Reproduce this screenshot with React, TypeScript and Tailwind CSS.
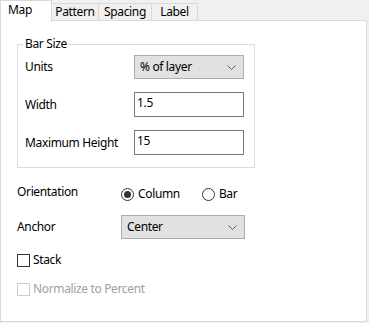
import React from "react";

const font = { fontFamily: '"Noto Sans", "Liberation Sans", sans-serif' };

function Chevron() {
  return (
    <svg width="9" height="5" viewBox="0 0 9 5" className="shrink-0">
      <path d="M0.5 0.5 L4.5 4.5 L8.5 0.5" fill="none" stroke="#5f5f5f" strokeWidth="1" />
    </svg>
  );
}

function Select({ value, className }: { value: string; className: string }) {
  return (
    <div
      className={`flex items-center justify-between h-[24px] bg-[#e1e1e1] border border-[#adadad] pl-[5px] pr-[7px] text-black ${className}`}
    >
      <span>{value}</span>
      <Chevron />
    </div>
  );
}

function TextBox({ value }: { value: string }) {
  return (
    <div className="h-[25px] w-[110px] bg-white border border-[#7a7a7a] pl-[2px] pt-[2px] leading-[16px] text-black">
      {value}
    </div>
  );
}

function Radio({ checked, label }: { checked: boolean; label: string }) {
  return (
    <div className="flex items-center gap-[4px]">
      <div className="w-[13px] h-[13px] rounded-full border border-[#333333] bg-white flex items-center justify-center">
        {checked && <div className="w-[7px] h-[7px] rounded-full bg-[#333333]" />}
      </div>
      <span>{label}</span>
    </div>
  );
}

export default function App() {
  return (
    <div
      className="w-[369px] h-[323px] bg-[#f0f0f0] text-[12px] tracking-[-0.35px] text-black"
      style={font}
    >
      <div className="flex items-end h-[21px]">
        <div className="relative z-10 h-[22px] w-[52px] bg-white border border-b-0 border-[#d9d9d9] pl-[7px] pt-[1px] leading-[16px] self-start">
          Map
        </div>
        <div className="h-[18px] w-[47px] border border-l-0 border-[#d9d9d9] bg-[#f0f0f0] flex justify-center leading-[16px]">
          Pattern
        </div>
        <div className="h-[18px] w-[53px] border border-l-0 border-[#d9d9d9] bg-[#f0f0f0] flex justify-center leading-[16px]">
          Spacing
        </div>
        <div className="h-[18px] w-[46px] border border-l-0 border-[#d9d9d9] bg-[#f0f0f0] flex justify-center leading-[16px]">
          Label
        </div>
      </div>
      <div className="-mt-px w-[367px] h-[302px] bg-white border border-[#d9d9d9] pl-[16px] pt-[23px]">
        <div className="relative w-[238px] h-[124px] border border-[#dcdcdc] pl-[7px] pr-[8px] pt-[10px] flex flex-col gap-[13px]">
          <span className="absolute -top-[10px] left-[6px] bg-white px-[1px] leading-[18px]">Bar Size</span>
          <div className="flex items-center">
            <span className="w-[109px]">Units</span>
            <Select value="% of layer" className="w-[110px]" />
          </div>
          <div className="flex items-center">
            <span className="w-[109px]">Width</span>
            <TextBox value="1.5" />
          </div>
          <div className="flex items-center">
            <span className="w-[109px]">Maximum Height</span>
            <TextBox value="15" />
          </div>
        </div>
        <div className="mt-[16px] h-[20px] flex items-center">
          <span className="w-[104px] -mt-[4px]">Orientation</span>
          <div className="flex items-center gap-[22px]">
            <Radio checked label="Column" />
            <Radio checked={false} label="Bar" />
          </div>
        </div>
        <div className="mt-[11px] flex items-center">
          <span className="w-[104px]">Anchor</span>
          <Select value="Center" className="w-[124px]" />
        </div>
        <div className="mt-[14px] flex items-center gap-[3px] h-[14px]">
          <div className="w-[13px] h-[13px] border border-[#333333] bg-white" />
          <span>Stack</span>
        </div>
        <div className="mt-[15px] flex items-center gap-[3px] h-[14px] text-[#a0a0a0]">
          <div className="w-[13px] h-[13px] border border-[#cccccc] bg-white" />
          <span>Normalize to Percent</span>
        </div>
      </div>
    </div>
  );
}
